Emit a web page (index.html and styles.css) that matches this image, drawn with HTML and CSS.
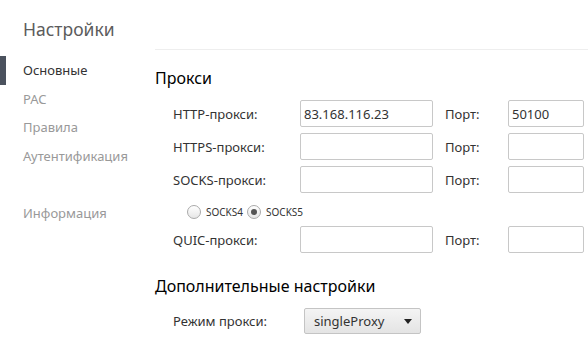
FILE: index.html
```html
<!DOCTYPE html>
<html lang="ru">
<head>
  <meta charset="UTF-8">
  <title>Настройки</title>
  <link rel="stylesheet" href="styles.css">
</head>
<body>
  <div class="page">
    <div class="sidebar">
      <h1 class="titulo">Настройки</h1>
      <ul class="menu">
        <li class="ativo">Основные</li>
        <li>PAC</li>
        <li>Правила</li>
        <li>Аутентификация</li>
        <li class="separado">Информация</li>
      </ul>
    </div>

    <div class="conteudo">
      <h2>Прокси</h2>
      <div class="grade">
        <label for="http">HTTP-прокси:</label>
        <input type="text" id="http" value="83.168.116.23">
        <label for="http-porta" class="porta">Порт:</label>
        <input type="text" id="http-porta" value="50100">

        <label for="https">HTTPS-прокси:</label>
        <input type="text" id="https">
        <label for="https-porta" class="porta">Порт:</label>
        <input type="text" id="https-porta">

        <label for="socks">SOCKS-прокси:</label>
        <input type="text" id="socks">
        <label for="socks-porta" class="porta">Порт:</label>
        <input type="text" id="socks-porta">

        <div class="radios">
          <span class="radio"></span><span class="rotulo">SOCKS4</span>
          <span class="radio marcado"></span><span class="rotulo">SOCKS5</span>
        </div>

        <label for="quic">QUIC-прокси:</label>
        <input type="text" id="quic">
        <label for="quic-porta" class="porta">Порт:</label>
        <input type="text" id="quic-porta">
      </div>

      <h2 class="extra">Дополнительные настройки</h2>
      <div class="modo">
        <label>Режим прокси:</label>
        <div class="select">singleProxy<span class="seta"></span></div>
      </div>
    </div>
  </div>
</body>
</html>
```

FILE: styles.css
```css
body {
  margin: 0;
  font-family: "Noto Sans", "Open Sans", sans-serif;
  background-color: #fff;
  color: #333;
  font-size: 13px;
}

.page {
  display: flex;
}

.sidebar {
  width: 155px;
  flex-shrink: 0;
}

.titulo {
  margin: 0;
  padding: 17px 0 0 23px;
  font-size: 17.5px;
  font-weight: normal;
  color: #5c5c5c;
  line-height: 25px;
}

.menu {
  list-style: none;
  margin: 14px 0 0;
  padding: 0;
}

.menu li {
  line-height: 28.5px;
  color: #999;
  padding-left: 23px;
}

.menu li.ativo {
  color: #333;
  border-left: 6px solid #4b525e;
  padding-left: 17px;
}

.menu li.separado {
  margin-top: 28.5px;
}

.conteudo {
  flex: 1;
  margin-top: 49px;
  border-top: 1px solid #eee;
}

h2 {
  margin: 0;
  font-size: 16px;
  font-weight: normal;
  color: #000;
  line-height: 22px;
  padding-top: 17px;
}

.grade {
  display: grid;
  grid-template-columns: 127px 133px 75px 76px;
  grid-template-rows: 27px 27px 27px 21px 27px;
  row-gap: 6px;
  margin: 11px 0 0 18px;
  align-items: center;
}

.grade input, .select {
  box-sizing: border-box;
  height: 27px;
  border: 1px solid #c8c8c8;
  border-radius: 2px;
  font-family: inherit;
  font-size: 13px;
  color: #333;
  padding: 0 3px;
  margin: 0;
  width: 100%;
}

.porta {
  padding-left: 12px;
}

.radios {
  grid-column: 1 / -1;
  display: flex;
  align-items: center;
  padding: 4px 0 0 14px;
  font-size: 10px;
  color: #333;
}

.radio {
  width: 12px;
  height: 12px;
  border: 1px solid #aaa;
  border-radius: 50%;
  background: linear-gradient(#fff, #e6e6e6);
  position: relative;
}

.radio.marcado::after {
  content: "";
  position: absolute;
  left: 3px;
  top: 3px;
  width: 6px;
  height: 6px;
  border-radius: 50%;
  background-color: #555;
}

.rotulo {
  margin: 0 4px 0 5px;
}

.extra {
  padding-top: 22px;
}

.modo {
  display: flex;
  align-items: center;
  margin: 11px 0 0 18px;
}

.modo label {
  width: 131px;
}

.select {
  width: 117px;
  height: 26px;
  display: flex;
  align-items: center;
  justify-content: space-between;
  padding: 0 8px 0 9px;
  background: linear-gradient(#f4f4f4, #e4e4e4);
  border-color: #c4c4c4;
}

.seta {
  width: 0;
  height: 0;
  border-left: 4px solid transparent;
  border-right: 4px solid transparent;
  border-top: 5px solid #222;
}
```
